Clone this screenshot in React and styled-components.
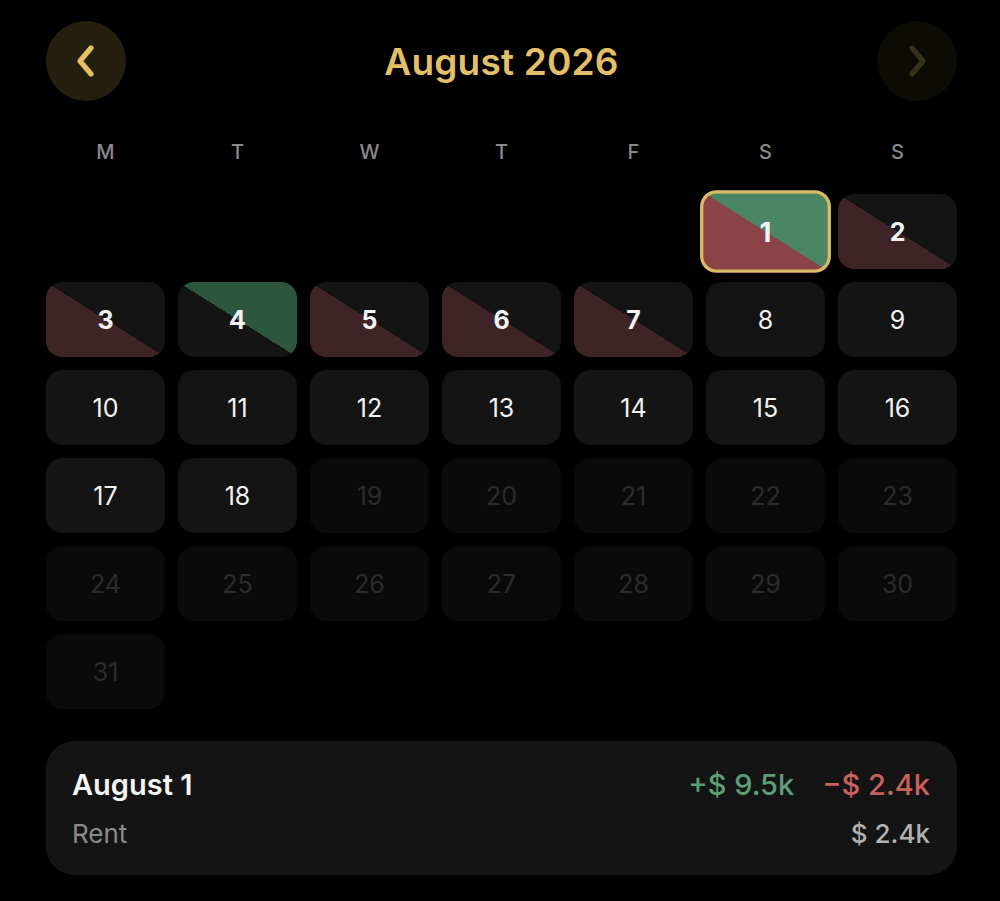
import React from "react";
import styled, { createGlobalStyle, css } from "styled-components";

const GlobalStyle = createGlobalStyle`
  html, body {
    margin: 0;
    padding: 0;
    background: #000;
    font-family: Inter, "Noto Sans", "Liberation Sans", sans-serif;
  }
`;

const Page = styled.div`
  width: 1000px;
  height: 901px;
  box-sizing: border-box;
  padding: 21px 43px 0 46px;
  background: #000;
  overflow: hidden;
`;

const Header = styled.div`
  display: flex;
  align-items: center;
  justify-content: space-between;
  height: 80px;
`;

const NavButton = styled.button`
  width: 80px;
  height: 80px;
  border-radius: 50%;
  border: none;
  padding: 0;
  display: flex;
  align-items: center;
  justify-content: center;
  background: ${(p) => (p.$dim ? "#0c0b06" : "#241f0e")};
  color: ${(p) => (p.$dim ? "#38321c" : "#e6c05e")};
  cursor: pointer;
`;

const Title = styled.h1`
  margin: 0;
  font-size: 37px;
  font-weight: 600;
  color: #e3bf68;
  letter-spacing: 0.2px;
`;

const Weekdays = styled.div`
  display: grid;
  grid-template-columns: repeat(7, 1fr);
  column-gap: 13px;
  margin-top: 36px;
  height: 30px;
`;

const Weekday = styled.div`
  text-align: center;
  font-size: 20px;
  font-weight: 500;
  line-height: 30px;
  color: #8a8a8a;
`;

const Grid = styled.div`
  display: grid;
  grid-template-columns: repeat(7, 1fr);
  grid-auto-rows: 75px;
  gap: 13px;
  margin-top: 27px;
`;

const Cell = styled.div`
  border-radius: 16px;
  display: flex;
  align-items: center;
  justify-content: center;
  font-size: 25px;
  font-weight: ${(p) => (p.$bold ? 700 : 400)};
  color: ${(p) => (p.$future ? "#2c2c2c" : "#f2f2f2")};
  background: ${(p) => p.$bg};
  ${(p) =>
    p.$selected &&
    css`
      transform: scale(1.1);
      box-shadow: inset 0 0 0 3px #dcba62;
      border-radius: 15px;
    `}
`;

const Empty = styled.div``;

const Card = styled.div`
  margin-top: 32px;
  background: #141414;
  border-radius: 28px;
  padding: 26px 27px 26px 26px;
  display: flex;
  flex-direction: column;
  gap: 16px;
`;

const CardRow = styled.div`
  display: flex;
  align-items: center;
  justify-content: space-between;
`;

const CardTitle = styled.div`
  font-size: 29px;
  font-weight: 600;
  color: #f5f5f5;
`;

const Amounts = styled.div`
  display: flex;
  gap: 28px;
`;

const Amount = styled.div`
  font-size: 29px;
  font-weight: 500;
  color: ${(p) => p.$color};
`;

const Label = styled.div`
  font-size: 26px;
  color: ${(p) => p.$color || "#8b8b8b"};
  font-weight: ${(p) => p.$weight || 400};
`;

const Chevron = ({ dir }) => (
  <svg width="48" height="48" viewBox="0 0 24 24" fill="none">
    <path
      d={dir === "left" ? "M14.5 5.5l-5.5 6.5 5.5 6.5" : "M9.5 5.5l5.5 6.5-5.5 6.5"}
      stroke="currentColor"
      strokeWidth="2.6"
      strokeLinecap="round"
      strokeLinejoin="round"
    />
  </svg>
);

const BASE = "#141414";
const FUTURE = "#0a0a0a";

const split = (bl, tr) => `linear-gradient(to top right, ${bl} 50%, ${tr} 50%)`;

const days = {
  1: { bg: split("#8a4448", "#4a8564"), selected: true },
  2: { bg: split("#3e2427", BASE) },
  3: { bg: split("#3e2427", BASE) },
  4: { bg: split(BASE, "#2d5640") },
  5: { bg: split("#3e2427", BASE) },
  6: { bg: split("#3e2427", BASE) },
  7: { bg: split("#3e2427", BASE) },
};

const weekdays = ["M", "T", "W", "T", "F", "S", "S"];

export default function App() {
  const cells = [];
  for (let i = 0; i < 5; i++) cells.push(<Empty key={"e" + i} />);
  for (let d = 1; d <= 31; d++) {
    const info = days[d];
    const future = d > 18;
    cells.push(
      <Cell
        key={d}
        $bg={info ? info.bg : future ? FUTURE : BASE}
        $bold={!!info}
        $future={future}
        $selected={info && info.selected}
      >
        {d}
      </Cell>
    );
  }

  return (
    <>
      <GlobalStyle />
      <Page>
        <Header>
          <NavButton>
            <Chevron dir="left" />
          </NavButton>
          <Title>August 2026</Title>
          <NavButton $dim>
            <Chevron dir="right" />
          </NavButton>
        </Header>
        <Weekdays>
          {weekdays.map((w, i) => (
            <Weekday key={i}>{w}</Weekday>
          ))}
        </Weekdays>
        <Grid>{cells}</Grid>
        <Card>
          <CardRow>
            <CardTitle>August 1</CardTitle>
            <Amounts>
              <Amount $color="#5b9e78">+$ 9.5k</Amount>
              <Amount $color="#c9615f">−$ 2.4k</Amount>
            </Amounts>
          </CardRow>
          <CardRow>
            <Label>Rent</Label>
            <Label $color="#b2b2b2" $weight={500}>$ 2.4k</Label>
          </CardRow>
        </Card>
      </Page>
    </>
  );
}
